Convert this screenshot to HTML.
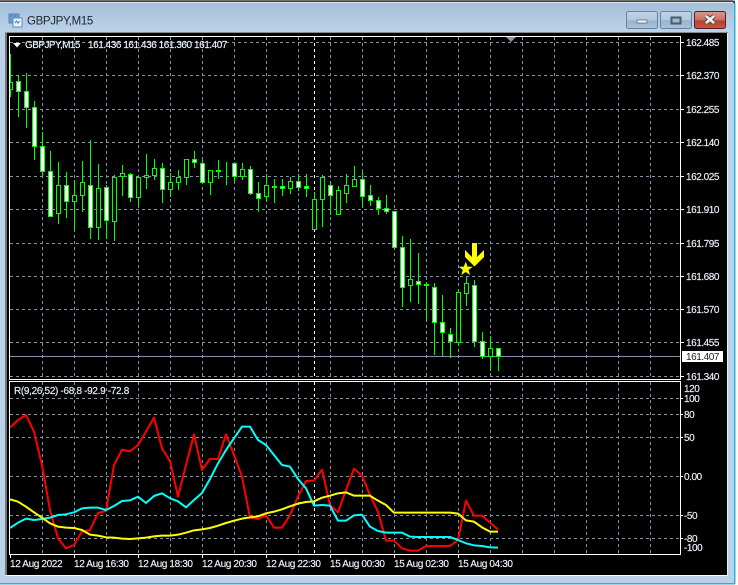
<!DOCTYPE html>
<html><head><meta charset="utf-8"><title>GBPJPY,M15</title>
<style>
html,body{margin:0;padding:0;width:738px;height:585px;overflow:hidden;background:#fff}
svg{display:block}
text{font-family:"Liberation Sans",sans-serif;font-size:10px;fill:#f0f6ff;stroke:#e4eef8;stroke-width:.15px;letter-spacing:-.45px}
.d{font-size:10px;letter-spacing:-.36px}
</style></head><body>
<svg width="738" height="585" viewBox="0 0 738 585" xmlns="http://www.w3.org/2000/svg">
<defs>
<linearGradient id="tb" x1="0" y1="0" x2="0" y2="1"><stop offset="0" stop-color="#a3bdd8"/><stop offset="1" stop-color="#bcd3e9"/></linearGradient>
<linearGradient id="bt" x1="0" y1="0" x2="0" y2="1"><stop offset="0" stop-color="#c2d5e8"/><stop offset=".5" stop-color="#b0c8de"/><stop offset=".55" stop-color="#95b2cf"/><stop offset="1" stop-color="#a9c5df"/></linearGradient>
<linearGradient id="cl" x1="0" y1="0" x2="0" y2="1"><stop offset="0" stop-color="#dc9a90"/><stop offset=".5" stop-color="#cc6f60"/><stop offset=".55" stop-color="#b7402f"/><stop offset="1" stop-color="#c45a45"/></linearGradient>
</defs>
<rect width="738" height="585" fill="#fff"/>
<rect width="735" height="584" fill="#b9d1e9"/>
<rect width="735" height="33" fill="url(#tb)"/>
<rect width="733" height="1" fill="#777"/>
<rect y="1" width="733" height="1" fill="#3c3c3c"/>
<rect y="2" width="733" height="1" fill="#dfe8f1"/>
<rect x="734" y="3" width="1.500" height="581" fill="#23b6d8"/>
<rect x="733" y="1" width="2" height="2" fill="#3c3c3c"/>
<!-- icon -->
<rect x="9" y="14" width="10" height="9" fill="#6e9ed0" stroke="#4d84bd"/>
<rect x="13" y="18" width="9" height="9" fill="#e8f2fb" stroke="#5b8fc4"/>
<path d="M10 16h2M14 16h2M15 23l1.500-2 1.500 2 1.500-2" stroke="#3f78b5" fill="none"/>
<text x="27" y="24.500" style="font-size:11.500px;fill:#1d2630;stroke:none;letter-spacing:-.35px">GBPJPY,M15</text>
<!-- buttons -->
<rect x="626.500" y="11.500" width="31" height="17" rx="2" fill="url(#bt)" stroke="#6c8198"/>
<rect x="637" y="20" width="10" height="3" fill="#f2f5f8" stroke="#52606e" stroke-width=".7"/>
<rect x="660.500" y="11.500" width="31" height="17" rx="2" fill="url(#bt)" stroke="#6c8198"/>
<rect x="671.500" y="17.500" width="9" height="6" fill="#9db8d2" stroke="#4d5a68" stroke-width="2"/>
<rect x="694.500" y="11.500" width="31" height="17" rx="2" fill="url(#cl)" stroke="#5c1c28"/>
<path d="M706 16l8 7M714 16l-8 7" stroke="#3f3f46" stroke-width="4.500"/>
<path d="M706 16l8 7M714 16l-8 7" stroke="#f1f1f1" stroke-width="2.800"/>
<!-- client -->
<rect x="5" y="32" width="723" height="544" fill="#767676"/>
<rect x="5" y="32" width="723" height="1" fill="#8a8a8a"/>
<rect x="7" y="33" width="720" height="542" fill="#000"/>
<rect x="5" y="575" width="723" height="1" fill="#fff"/>
<rect x="727" y="33" width="1" height="543" fill="#e8eff6"/>
<rect x="0" y="583" width="735" height="1.500" fill="#23b6d8"/>
<!-- grid -->
<g stroke="#8494a6" stroke-width="1" stroke-dasharray="3 3" shape-rendering="crispEdges">
<path d="M10 42.500H680M10 75.500H680M10 109.500H680M10 142.500H680M10 176.500H680M10 209.500H680M10 243.500H680M10 276.500H680M10 309.500H680M10 342.500H680M10 376.500H680"/>
<path d="M10 398.500H680M10 414.500H680M10 437.500H680M10 476.500H680M10 515.500H680M10 538.500H680"/>
<path d="M42.500 37V379M74.500 37V379M106.500 37V379M138.500 37V379M170.500 37V379M202.500 37V379M234.500 37V379M266.500 37V379M298.500 37V379M330.500 37V379M362.500 37V379M394.500 37V379M426.500 37V379M458.500 37V379M490.500 37V379M522.500 37V379M554.500 37V379M586.500 37V379M618.500 37V379M650.500 37V379"/>
<path d="M42.500 382V554M74.500 382V554M106.500 382V554M138.500 382V554M170.500 382V554M202.500 382V554M234.500 382V554M266.500 382V554M298.500 382V554M330.500 382V554M362.500 382V554M394.500 382V554M426.500 382V554M458.500 382V554M490.500 382V554M522.500 382V554M554.500 382V554M586.500 382V554M618.500 382V554M650.500 382V554"/>
</g>
<path d="M314.500 37V379M314.500 382V554" stroke="#fff" stroke-dasharray="3 3" shape-rendering="crispEdges"/>
<path d="M10 356.500H680" stroke="#8494a6" shape-rendering="crispEdges"/>
<!-- candles -->
<g shape-rendering="crispEdges" stroke="#00ff00" stroke-width="1">
<path fill="none" d="M10.500 54V97M18.500 75V117M26.500 73V128M34.500 101V160M42.500 132V177M50.500 151V216M58.500 162V224M66.500 172V218M74.500 180V230M82.500 161V212M90.500 140V239M98.500 164V240M106.500 185V239M114.500 175V241M122.500 165V196M130.500 173V202M138.500 176V206M146.500 154V189M154.500 159V180M162.500 163V203M170.500 173V197M178.500 170V190M186.500 159V185M194.500 151V168M202.500 160V183M210.500 170V195M218.500 160V179M226.500 162V185M234.500 162V182M242.500 163V180M250.500 166V195M258.500 182V212M266.500 174V201M274.500 179V203M282.500 179V196M290.500 177V194M298.500 174V191M306.500 174V197M314.500 192V230M322.500 175V227M330.500 181V215M338.500 186V215M346.500 174V203M354.500 166V187M362.500 172V207M370.500 185V206M378.500 197V215M386.500 195V214M394.500 211V248M402.500 236V307M410.500 239V302M418.500 253V304M426.500 282V321M434.500 283V355M442.500 295V356M450.500 328V358M458.500 292V346M466.500 277V306M474.500 280V347M482.500 332V359M490.500 336V371M498.500 348V371"/>
<path fill="#fff" d="M16.500 81.500h4V91.500h-4zM24.500 91.500h4V107.500h-4zM32.500 107.500h4V146.500h-4zM40.500 146.500h4V171.500h-4zM48.500 171.500h4V216.500h-4zM64.500 185.500h4V201.500h-4zM88.500 185.500h4V227.500h-4zM104.500 187.500h4V220.500h-4zM128.500 174.500h4V197.500h-4zM160.500 168.500h4V189.500h-4zM192.500 159.500h4V162.500h-4zM200.500 163.500h4V182.500h-4zM216.500 170.500h4V171.500h-4zM232.500 163.500h4V176.500h-4zM248.500 169.500h4V193.500h-4zM256.500 193.500h4V198.500h-4zM272.500 186.500h4V187.500h-4zM280.500 186.500h4V188.500h-4zM296.500 181.500h4V187.500h-4zM304.500 186.500h4V188.500h-4zM328.500 185.500h4V195.500h-4zM360.500 179.500h4V196.500h-4zM368.500 195.500h4V200.500h-4zM376.500 200.500h4V208.500h-4zM384.500 208.500h4V211.500h-4zM392.500 211.500h4V247.500h-4zM400.500 247.500h4V287.500h-4zM416.500 281.500h4V284.500h-4zM424.500 284.500h4V285.500h-4zM432.500 287.500h4V322.500h-4zM440.500 322.500h4V332.500h-4zM448.500 334.500h4V341.500h-4zM472.500 285.500h4V341.500h-4zM480.500 341.500h4V356.500h-4zM496.500 348.500h4V356.500h-4z"/>
<path fill="#000" d="M10.500 82.500h2V89.500h-2M56.500 185.500h4V213.500h-4zM72.500 195.500h4V201.500h-4zM80.500 182.500h4V195.500h-4zM96.500 188.500h4V227.500h-4zM112.500 177.500h4V221.500h-4zM120.500 173.500h4V176.500h-4zM136.500 177.500h4V197.500h-4zM144.500 175.500h4V177.500h-4zM152.500 168.500h4V175.500h-4zM168.500 182.500h4V189.500h-4zM176.500 177.500h4V182.500h-4zM184.500 159.500h4V177.500h-4zM208.500 170.500h4V182.500h-4zM240.500 169.500h4V176.500h-4zM264.500 185.500h4V196.500h-4zM288.500 181.500h4V188.500h-4zM312.500 199.500h4V229.500h-4zM320.500 177.500h4V199.500h-4zM336.500 190.500h4V214.500h-4zM344.500 185.500h4V193.500h-4zM352.500 179.500h4V186.500h-4zM408.500 279.500h4V285.500h-4zM456.500 292.500h4V342.500h-4zM464.500 283.500h4V293.500h-4zM488.500 348.500h4V356.500h-4z"/>
</g>
<!-- star & arrow -->
<polygon fill="#ffff00" points="465.700,261.500 467.500,266.600 472.800,266.700 468.600,269.900 470.100,275.100 465.700,272 461.300,275.100 462.800,269.900 458.600,266.700 463.900,266.600"/>
<polygon fill="#ffff00" points="472,243 477,243 477,257 484,250 484,257 474.500,266.500 465,257 465,250 472,257"/>
<!-- indicators -->
<g transform="translate(0,375) scale(.33333)" fill="none" stroke-width="6" stroke-linejoin="round">
<polyline stroke="#ff0000" points="30,158 54,135 78,120 102,170 126,270 150,405 174,490 198,520 222,510 246,470 270,465 294,414 318,408 342,270 366,224 390,229 414,210 438,170 462,128 486,220 510,258 534,365 558,270 582,178 606,285 630,252 654,252 678,178 702,240 726,305 750,428 774,432 798,421 822,458 846,458 870,420 894,365 918,318 942,317 966,284 990,390 1014,412 1038,345 1062,281 1086,302 1110,360 1134,410 1158,497 1182,497 1206,520 1230,527 1254,527 1278,513 1302,513 1326,513 1350,513 1374,495 1398,377 1422,422 1446,422 1470,443 1494,463"/>
<polyline stroke="#00ffff" points="30,459 54,443 78,431 102,435 126,432 150,428 174,420 198,418 222,412 246,400 270,398 294,398 318,405 342,393 366,378 390,376 414,365 438,384 462,363 486,355 510,370 534,379 558,397 582,375 606,354 630,312 654,265 678,225 702,190 726,155 750,155 774,195 798,210 822,240 846,270 870,275 894,312 918,340 942,392 966,390 990,392 1014,437 1038,437 1062,421 1086,419 1110,455 1134,468 1158,473 1182,473 1206,473 1230,485 1254,486 1278,486 1302,486 1326,486 1350,486 1374,495 1398,505 1422,511 1446,513 1470,517 1494,518"/>
<polyline stroke="#ffff00" points="30,373 54,380 78,395 102,412 126,428 150,445 174,455 198,458 222,459 246,465 270,479 294,482 318,487 342,488 366,491 390,492 414,490 438,488 462,484 486,482 510,482 534,479 558,473 582,466 606,463 630,459 654,452 678,444 702,437 726,431 750,427 774,424 798,415 822,410 846,403 870,394 894,386 918,381 942,379 966,368 990,362 1014,355 1038,352 1062,362 1086,362 1110,362 1134,377 1158,390 1182,413 1350,413 1374,416 1398,436 1422,440 1446,457 1470,470 1494,470"/>
</g>
<!-- frames -->
<g fill="none" stroke="#fff" shape-rendering="crispEdges">
<path d="M9.500 36.500H680.500V379.500H9.500z"/>
<path d="M9.500 381.500H680.500V554.500H9.500z"/>
<path d="M681 42.500h3M681 75.500h3M681 109.500h3M681 142.500h3M681 176.500h3M681 209.500h3M681 243.500h3M681 276.500h3M681 309.500h3M681 342.500h3M681 376.500h3"/>
<path d="M681 398.500h2M681 414.500h2M681 437.500h2M681 476.500h2M681 515.500h2M681 538.500h2"/>
<path d="M10.500 555v3M74.500 555v3M138.500 555v3M202.500 555v3M266.500 555v3M330.500 555v3M394.500 555v3M458.500 555v3"/>
</g>
<polygon points="506,37 516,37 511,42" fill="#8b98a5"/>
<polygon points="13,43 21,43 17,47.500" fill="#fff"/>
<!-- header text -->
<text x="25" y="48" style="letter-spacing:-.55px">GBPJPY,M15</text>
<text x="88" y="48">161.436 161.436 161.360 161.407</text>
<text x="14" y="394" style="letter-spacing:-.32px">R(9,26,52) -68.8 -92.9 -72.8</text>
<!-- price scale -->
<text x="686" y="46">162.485</text>
<text x="686" y="79">162.370</text>
<text x="686" y="113">162.255</text>
<text x="686" y="146">162.140</text>
<text x="686" y="180">162.025</text>
<text x="686" y="213">161.910</text>
<text x="686" y="247">161.795</text>
<text x="686" y="280">161.680</text>
<text x="686" y="313">161.570</text>
<text x="686" y="346">161.455</text>
<text x="686" y="380">161.340</text>
<rect x="682" y="351" width="41" height="11" fill="#fff"/>
<text x="686" y="360" style="fill:#222;stroke:none">161.407</text>
<text x="684" y="392">120</text>
<text x="684" y="402">100</text>
<text x="684" y="418">80</text>
<text x="684" y="441">50</text>
<text x="684" y="480">0.00</text>
<text x="684" y="519">-50</text>
<text x="684" y="542">-80</text>
<text x="684" y="551">-100</text>
<!-- time scale -->
<text class="d" x="10" y="567">12 Aug 2022</text>
<text class="d" x="74" y="567">12 Aug 16:30</text>
<text class="d" x="138" y="567">12 Aug 18:30</text>
<text class="d" x="202" y="567">12 Aug 20:30</text>
<text class="d" x="266" y="567">12 Aug 22:30</text>
<text class="d" x="330" y="567">15 Aug 00:30</text>
<text class="d" x="394" y="567">15 Aug 02:30</text>
<text class="d" x="458" y="567">15 Aug 04:30</text>
</svg>
</body></html>
